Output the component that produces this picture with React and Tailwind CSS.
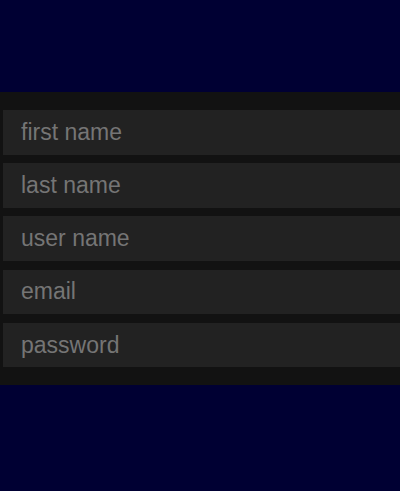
export default function App() {
  const fields = ["first name", "last name", "user name", "email", "password"];

  return (
    <div className="min-h-[491px] w-[400px] overflow-hidden bg-[#000033] pt-[92px] font-['Liberation_Sans',Arial,sans-serif]">
      <form className="w-[420px] bg-[#121212] pt-[18px] pb-[18px] pl-[3px] flex flex-col gap-[8.6px]">
        {fields.map((f) => (
          <input
            key={f}
            type={f === "password" ? "password" : "text"}
            placeholder={f}
            className="h-[44.6px] w-full bg-[#222222] pl-[18px] text-[23px] text-[#757575] placeholder:text-[#757575] outline-none"
          />
        ))}
      </form>
    </div>
  );
}
